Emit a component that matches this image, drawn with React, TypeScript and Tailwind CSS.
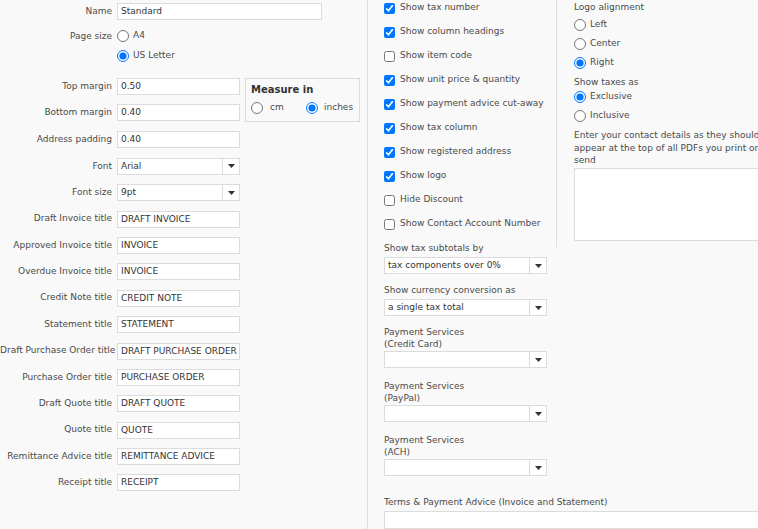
import { ReactNode } from "react";

const font = { fontFamily: '"DejaVu Sans", Tahoma, sans-serif' };

const Arrow = () => (
  <span className="flex items-center justify-center w-[17px] h-full border-l border-[#dcdcdc]">
    <svg width="7" height="4" viewBox="0 0 7 4">
      <path d="M0 0h7L3.5 4z" fill="#333" />
    </svg>
  </span>
);

const TextBox = ({ value, w = "w-[123px]" }: { value: string; w?: string }) => (
  <div
    className={`${w} h-[17px] border border-[#dcdcdc] bg-white px-[3px] text-[9px] leading-[15px] text-[#333] whitespace-nowrap overflow-hidden`}
  >
    {value}
  </div>
);

const SelectBox = ({ value, w = "w-[123px]" }: { value: string; w?: string }) => (
  <div className={`${w} h-[17px] border border-[#dcdcdc] bg-white flex`}>
    <span className="flex-1 px-[3px] text-[9px] leading-[15px] text-[#333] whitespace-nowrap overflow-hidden">
      {value}
    </span>
    <Arrow />
  </div>
);

const Row = ({ label, children }: { label: string; children: ReactNode }) => (
  <div className="flex items-center h-[17px]">
    <span className="w-[117px] shrink-0 text-right pr-[5px] whitespace-nowrap">{label}</span>
    {children}
  </div>
);

const Radio = ({ checked, label, gap = "gap-[4px]" }: { checked?: boolean; label: string; gap?: string }) => (
  <label className={`flex items-center ${gap} whitespace-nowrap`}>
    <input
      type="radio"
      defaultChecked={checked}
      className="m-0 w-3 h-3 accent-[#0075ff]"
    />
    <span>{label}</span>
  </label>
);

const Check = ({ checked, label }: { checked?: boolean; label: string }) => (
  <label className="flex items-center gap-[5px] h-[24px] whitespace-nowrap">
    <input
      type="checkbox"
      defaultChecked={checked}
      className="m-0 w-[11px] h-[11px] accent-[#0075ff]"
    />
    <span>{label}</span>
  </label>
);

const titles: [string, string][] = [
  ["Draft Invoice title", "DRAFT INVOICE"],
  ["Approved Invoice title", "INVOICE"],
  ["Overdue Invoice title", "INVOICE"],
  ["Credit Note title", "CREDIT NOTE"],
  ["Statement title", "STATEMENT"],
  ["Draft Purchase Order title", "DRAFT PURCHASE ORDER"],
  ["Purchase Order title", "PURCHASE ORDER"],
  ["Draft Quote title", "DRAFT QUOTE"],
  ["Quote title", "QUOTE"],
  ["Remittance Advice title", "REMITTANCE ADVICE"],
  ["Receipt title", "RECEIPT"],
];

const checks: [string, boolean][] = [
  ["Show tax number", true],
  ["Show column headings", true],
  ["Show item code", false],
  ["Show unit price & quantity", true],
  ["Show payment advice cut-away", true],
  ["Show tax column", true],
  ["Show registered address", true],
  ["Show logo", true],
  ["Hide Discount", false],
  ["Show Contact Account Number", false],
];

// PAYMENT SERVICE SELECT
const PaymentSelect = ({ name, top }: { name: string; top: string }) => (
  <div className={top}>
    <div className="leading-[12px]">Payment Services</div>
    <div className="leading-[12px]">({name})</div>
    <div className="mt-[1px]">
      <SelectBox value="" w="w-[163px]" />
    </div>
  </div>
);

export default function App() {
  return (
    <div
      style={font}
      className="w-[758px] h-[529px] overflow-hidden bg-[#f9f9f9] text-[9px] text-[#4a4a4a] flex"
    >
      {/* LEFT COLUMN */}
      <div className="w-[368px] shrink-0 border-r border-[#dedede] pt-[3px] flex flex-col">
        <Row label="Name">
          <TextBox value="Standard" w="w-[205px]" />
        </Row>

        <div className="flex mt-[9px]">
          <span className="w-[117px] shrink-0 text-right pr-[5px] leading-[14px]">Page size</span>
          <div className="flex flex-col gap-[6px]">
            <div className="h-[14px] flex items-center">
              <Radio label="A4" />
            </div>
            <div className="h-[14px] flex items-center">
              <Radio checked label="US Letter" />
            </div>
          </div>
        </div>

        <div className="flex mt-[15px] items-start">
          <div className="flex flex-col gap-[9.4px]">
            <Row label="Top margin">
              <TextBox value="0.50" />
            </Row>
            <Row label="Bottom margin">
              <TextBox value="0.40" />
            </Row>
          </div>
          <div className="ml-[5px] w-[115px] h-[44px] border border-[#dcdcdc] px-[5px] pt-[5px]">
            <div className="font-bold text-[#333] text-[10px] leading-[12px]">Measure in</div>
            <div className="flex items-center mt-[5px]">
              <div className="w-[55px]">
                <Radio label="cm" gap="gap-[7px]" />
              </div>
              <Radio checked label="inches" gap="gap-[6px]" />
            </div>
          </div>
        </div>

        <div className="flex flex-col gap-[9.4px] mt-[9.4px]">
          <Row label="Address padding">
            <TextBox value="0.40" />
          </Row>
          <Row label="Font">
            <SelectBox value="Arial" />
          </Row>
          <Row label="Font size">
            <SelectBox value="9pt" />
          </Row>
          {titles.map(([label, value]) => (
            <Row key={label} label={label}>
              <TextBox value={value} />
            </Row>
          ))}
        </div>
      </div>

      {/* RIGHT AREA */}
      <div className="flex-1 pl-[16px] flex flex-col min-w-0">
        <div className="flex h-[247px] shrink-0">
          <div className="w-[173px] shrink-0 border-r border-[#dedede] mt-[-4px]">
            {checks.map(([label, checked]) => (
              <Check key={label} label={label} checked={checked} />
            ))}
          </div>

          <div className="flex-1 pl-[17px] min-w-0">
            <div className="leading-[12px] mt-[1px]">Logo alignment</div>
            <div className="flex flex-col gap-[6px] mt-[5px]">
              <div className="h-[13px] flex items-center"><Radio label="Left" /></div>
              <div className="h-[13px] flex items-center"><Radio label="Center" /></div>
              <div className="h-[13px] flex items-center"><Radio checked label="Right" /></div>
            </div>
            <div className="leading-[12px] mt-[7px]">Show taxes as</div>
            <div className="flex flex-col gap-[6px] mt-[2px]">
              <div className="h-[13px] flex items-center"><Radio checked label="Exclusive" /></div>
              <div className="h-[13px] flex items-center"><Radio label="Inclusive" /></div>
            </div>
            <div className="leading-[12.5px] mt-[7px] whitespace-nowrap">
              Enter your contact details as they should
              <br />
              appear at the top of all PDFs you print or
              <br />
              send
            </div>
            <div className="mt-[1px] w-[200px] h-[73px] border border-[#dcdcdc] bg-white" />
          </div>
        </div>

        <div className="mt-[-5px] leading-[12px]">Show tax subtotals by</div>
        <div className="mt-[3px]">
          <SelectBox value="tax components over 0%" w="w-[163px]" />
        </div>

        <div className="mt-[10px] leading-[12px]">Show currency conversion as</div>
        <div className="mt-[3px]">
          <SelectBox value="a single tax total" w="w-[163px]" />
        </div>

        <PaymentSelect name="Credit Card" top="mt-[10px]" />
        <PaymentSelect name="PayPal" top="mt-[12px]" />
        <PaymentSelect name="ACH" top="mt-[12px]" />

        <div className="mt-[20px] leading-[12px]">Terms &amp; Payment Advice (Invoice and Statement)</div>
        <div className="mt-[3px] w-[400px] h-[60px] border border-[#dcdcdc] bg-white" />
      </div>
    </div>
  );
}
